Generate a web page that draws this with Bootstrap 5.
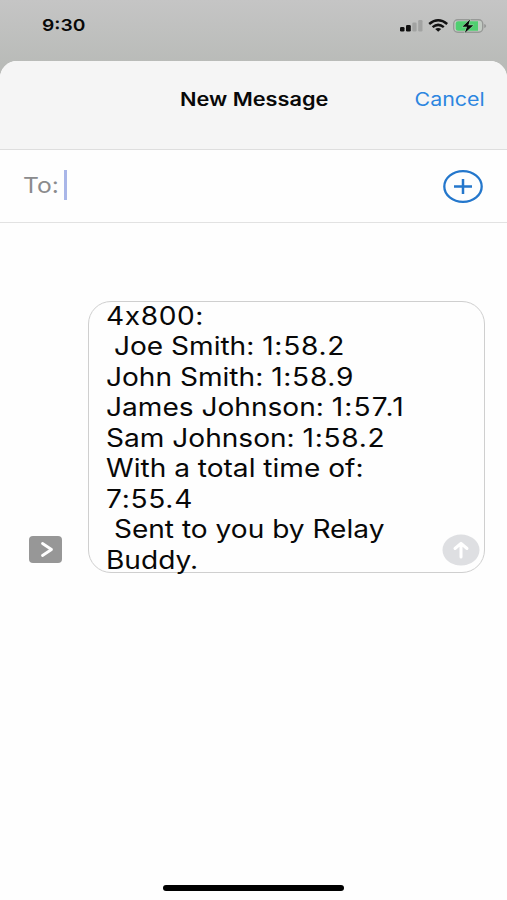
<!DOCTYPE html>
<html lang="en">
<head>
<meta charset="utf-8">
<meta name="viewport" content="width=device-width, initial-scale=1">
<title>New Message</title>
<link href="https://cdn.jsdelivr.net/npm/bootstrap@5.3.0/dist/css/bootstrap.min.css" rel="stylesheet">
<style>
body{font-family:Inter,"Liberation Sans",sans-serif;color:#080808;background:#bbbdba}
.screen{height:900px;background:linear-gradient(#c5c5c5,#b9bbb8 64px)}
.status{height:60.5px;padding:0 20px 0 42px}
.status-icons{margin-top:15.5px}
.sheet{background:#fefefe;border-radius:17px 17px 0 0}
.sheet-head{height:89.5px;background:#f5f5f5;border-bottom:1px solid #dedede;font-size:18.5px;line-height:28px;padding-top:24.5px}
.to-row{height:72.5px;border-bottom:1px solid #e2e2e2;padding:0 23px}
.wide{display:inline-block;white-space:pre;transform:scaleX(1.14);transform-origin:0 50%}
.clock{font-size:16.5px;line-height:20px;margin-top:15px;transform:scaleX(1.165)}
.mid{transform:scaleX(1.175);transform-origin:50% 50%;margin-left:2px}
.right{transform-origin:100% 50%}
.cancel{color:#2d86e0;margin-right:-2px;transform:scaleX(1.155)}
.to-label{font-size:22px;color:#8b8b8d;margin-top:-1px;transform:scaleX(1.12)}
.caret{width:3px;height:30px;background:#a9b6e8;margin:-2px 0 0 9px}
.compose{margin-top:78px;padding:0 22px 0 29px}
.app-btn{width:33px;height:27px;border-radius:4px;background:#979797;margin-bottom:10px}
.bubble{width:397px;height:272.5px;border:1.5px solid #cfcfcf;border-radius:23px;padding:0 4px 6px 17px}
.msg{font-size:25px;line-height:30.5px;margin-top:-1px;transform:scaleX(1.123)}
.plain-x{font-feature-settings:"calt" 0;letter-spacing:.55px}
.split{letter-spacing:.65px}
.split-wide{letter-spacing:1.05px}
.home-bar{width:181px;height:6px;border-radius:3px;background:#000;margin-bottom:9px}
</style>
</head>
<body>
<main class="screen d-flex flex-column overflow-hidden">
  <header class="status d-flex justify-content-between align-items-start flex-shrink-0">
    <span class="wide clock fw-semibold">9:30</span>
    <svg class="status-icons" width="88" height="20" viewBox="0 0 88 20">
      <rect x="1" y="11" width="4.5" height="4.5" rx="1.3" fill="#111"/>
      <rect x="7" y="9" width="4.8" height="6.5" rx="1.3" fill="#111"/>
      <rect x="13.3" y="6.5" width="4.3" height="9" rx="1.2" fill="#a2a3a2"/>
      <rect x="19.2" y="4" width="4.3" height="11.5" rx="1.2" fill="#a2a3a2"/>
      <g fill="none" stroke="#111" stroke-width="2.5"><path d="M30.2 8Q39.2 .6 48.2 8"/><path d="M33.6 11.1Q39.2 6.6 44.8 11.1"/></g>
      <path d="M36.2 13Q39.2 10.9 42.2 13L39.2 15.7Z" fill="#111"/>
      <rect x="54.7" y="3.7" width="29" height="12.6" rx="4" fill="#c3cbc3" stroke="#979997" stroke-width="1.4"/>
      <path d="M59 5.3H79V14.7H59Q56.7 14.7 56.7 12.5V7.5Q56.7 5.3 59 5.3Z" fill="#50cf70"/>
      <path d="M85.2 8V12Q87.2 11.5 87.2 10T85.2 8Z" fill="#979997"/>
      <path d="M71.2 3.2L63.3 10.8H68L65.8 16.9L74.3 9.2H69.3Z" fill="#080808" stroke="#c8e9cc" stroke-width=".8" paint-order="stroke"/>
    </svg>
  </header>
  <section class="sheet d-flex flex-column flex-grow-1 overflow-hidden">
    <div class="sheet-head row g-0 flex-shrink-0">
      <div class="col-3"></div>
      <div class="col-6 text-center"><span class="wide mid fw-semibold">New Message</span></div>
      <div class="col-3 text-end pe-4"><span class="wide right cancel">Cancel</span></div>
    </div>
    <div class="to-row d-flex align-items-center flex-shrink-0">
      <span class="wide to-label">To:</span>
      <span class="caret"></span>
      <svg class="ms-auto" width="42" height="36" viewBox="0 0 42 36" fill="none" stroke="#2477cc" stroke-width="2.3"><ellipse cx="21" cy="18.5" rx="18.7" ry="15.4"/><path d="M12 18.5H30M21 11V26" stroke-width="2.5"/></svg>
    </div>
    <div class="compose d-flex justify-content-between align-items-end">
      <div class="app-btn d-flex align-items-center justify-content-center">
        <svg width="33" height="27" viewBox="0 0 33 27"><path d="M13.5 7.5L22.5 13.5L13.5 19.5" fill="none" stroke="#fff" stroke-width="2.8" stroke-linecap="round" stroke-linejoin="round"/></svg>
      </div>
      <div class="bubble d-flex justify-content-between align-items-end">
        <div class="wide msg align-self-start"><span class="plain-x">4x800:</span>
 Joe Smith: <span class="split">1:58.2</span>
John Smith: <span class="split">1:58.9</span>
James Johnson: <span class="split-wide">1:57.1</span>
Sam Johnson: <span class="split">1:58.2</span>
With a total time of:
<span class="split">7:55.4</span>
 Sent to you by Relay
Buddy.</div>
        <svg width="38" height="32" viewBox="0 0 38 32"><ellipse cx="19" cy="16" rx="18.5" ry="15.5" fill="#dedfe2"/><path d="M19 23V9.5M13 14.5L19 9.3L25 14.5" fill="none" stroke="#fff" stroke-width="3" stroke-linecap="round" stroke-linejoin="round"/></svg>
      </div>
    </div>
    <div class="home-bar mt-auto mx-auto"></div>
  </section>
</main>
<script src="https://cdn.jsdelivr.net/npm/bootstrap@5.3.0/dist/js/bootstrap.bundle.min.js"></script>
</body>
</html>
